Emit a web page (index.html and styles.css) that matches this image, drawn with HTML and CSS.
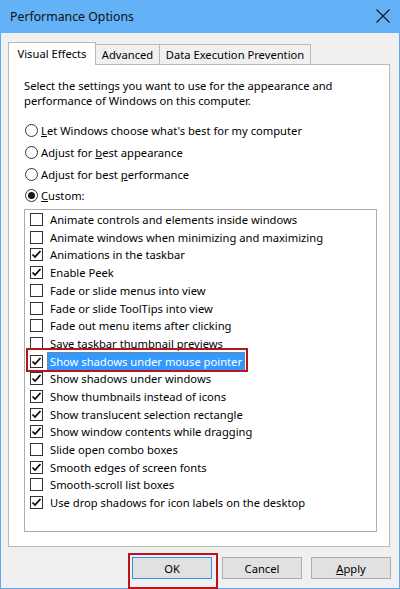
FILE: index.html
```html
<!DOCTYPE html>
<html lang="en">
    <head>
        <title>Performance Options</title>
        <link rel="stylesheet" href="styles.css">
    </head>
    <body>
        <div class="window">
            <div class="titlebar">
                <span class="title">Performance Options</span>
                <svg class="close" width="14" height="14" viewBox="0 0 14 14">
                    <path d="M0.5 0.5 L13.5 13.5 M13.5 0.5 L0.5 13.5" stroke="#1a1a1a" stroke-width="1.2" fill="none"/>
                </svg>
            </div>
            <div class="content">
                <div class="tabs">
                    <div class="tab active">Visual Effects</div>
                    <div class="tab tab-adv">Advanced</div>
                    <div class="tab tab-dep">Data Execution Prevention</div>
                </div>
                <div class="panel">
                    <p class="intro">Select the settings you want to use for the appearance and performance of Windows on this computer.</p>
                    <div class="radios">
                        <div class="radio"><span class="circle"></span><span><u>L</u>et Windows choose what's best for my computer</span></div>
                        <div class="radio"><span class="circle"></span><span>Adjust for <u>b</u>est appearance</span></div>
                        <div class="radio"><span class="circle"></span><span>Adjust for best <u>p</u>erformance</span></div>
                        <div class="radio on"><span class="circle"></span><span><u>C</u>ustom:</span></div>
                    </div>
                    <ul class="list">
                        <li><span class="box"></span><span class="label">Animate controls and elements inside windows</span></li>
                        <li><span class="box"></span><span class="label">Animate windows when minimizing and maximizing</span></li>
                        <li class="checked"><span class="box"></span><span class="label">Animations in the taskbar</span></li>
                        <li class="checked"><span class="box"></span><span class="label">Enable Peek</span></li>
                        <li><span class="box"></span><span class="label">Fade or slide menus into view</span></li>
                        <li><span class="box"></span><span class="label">Fade or slide ToolTips into view</span></li>
                        <li><span class="box"></span><span class="label">Fade out menu items after clicking</span></li>
                        <li><span class="box"></span><span class="label">Save taskbar thumbnail previews</span></li>
                        <li class="checked selected"><span class="box"></span><span class="label">Show shadows under mouse pointer</span></li>
                        <li class="checked"><span class="box"></span><span class="label">Show shadows under windows</span></li>
                        <li class="checked"><span class="box"></span><span class="label">Show thumbnails instead of icons</span></li>
                        <li class="checked"><span class="box"></span><span class="label">Show translucent selection rectangle</span></li>
                        <li class="checked"><span class="box"></span><span class="label">Show window contents while dragging</span></li>
                        <li><span class="box"></span><span class="label">Slide open combo boxes</span></li>
                        <li class="checked"><span class="box"></span><span class="label">Smooth edges of screen fonts</span></li>
                        <li><span class="box"></span><span class="label">Smooth-scroll list boxes</span></li>
                        <li class="checked"><span class="box"></span><span class="label">Use drop shadows for icon labels on the desktop</span></li>
                    </ul>
                </div>
                <div class="buttons">
                    <button class="btn default">OK</button>
                    <button class="btn">Cancel</button>
                    <button class="btn"><u>A</u>pply</button>
                </div>
            </div>
        </div>
        <script>
            // Draw the tick into every checked box
            document.querySelectorAll('li.checked .box').forEach(box => {
                box.innerHTML = '<svg width="11" height="11" viewBox="0 0 11 11"><path d="M1.5 5.5 L4 8 L9.5 2" stroke="#000" stroke-width="1.7" fill="none"/></svg>';
            });
        </script>
    </body>
</html>
```

FILE: styles.css
```css
body {
    margin: 0;
    font-family: "Noto Sans", "Liberation Sans", sans-serif;
    font-size: 11.2px;
    color: #000;
}

.window {
    width: 400px;
    height: 589px;
    box-sizing: border-box;
    border: 1px solid #5ea9f0;
    border-top: none;
    background-color: #f0f0f0;
    display: flex;
    flex-direction: column;
}

.titlebar {
    height: 33px;
    margin: 0 -1px;
    padding: 0 10px;
    background-color: #63b1f7;
    display: flex;
    align-items: center;
    justify-content: space-between;
}

.title {
    font-size: 12.3px;
    color: #111;
}

.close {
    margin-top: -1px;
}

.content {
    padding: 9px 9px 0 7px;
}

/* Tabs */

.tabs {
    display: flex;
    align-items: flex-end;
    height: 22px;
}

.tab {
    height: 20px;
    box-sizing: border-box;
    border: 1px solid #b9b9b9;
    border-bottom: none;
    border-left: none;
    background-color: #f0f0f0;
    line-height: 19px;
    text-align: center;
    white-space: nowrap;
}

.tab-adv {
    width: 64px;
}

.tab-dep {
    width: 151px;
}

.tab.active {
    width: 88px;
    height: 23px;
    margin-bottom: -1px;
    border-left: 1px solid #b9b9b9;
    background-color: white;
    position: relative;
    z-index: 1;
    line-height: 21px;
}

/* Panel */

.panel {
    height: 483px;
    box-sizing: border-box;
    padding: 13px 12px 0 15px;
    border: 1px solid #b9b9b9;
    background-color: white;
}

.intro {
    margin: 0;
    line-height: 15px;
    padding-right: 10px;
}

.radios {
    margin-top: 12px;
}

.radio {
    height: 21.7px;
    display: flex;
    align-items: center;
}

.circle {
    width: 13px;
    height: 13px;
    box-sizing: border-box;
    margin: 0 3px 0 1px;
    border: 1px solid #333;
    border-radius: 50%;
    display: flex;
    align-items: center;
    justify-content: center;
}

.radio.on .circle::before {
    content: "";
    width: 7px;
    height: 7px;
    border-radius: 50%;
    background-color: #1a1a1a;
}

/* Check list */

.list {
    list-style: none;
    margin: 2px 0 0 0;
    padding: 1px 0 0 5px;
    height: 323px;
    box-sizing: border-box;
    border: 1px solid #adadad;
}

.list li {
    height: 17.7px;
    display: flex;
    align-items: center;
    position: relative;
}

.box {
    width: 13px;
    height: 13px;
    box-sizing: border-box;
    border: 1px solid #333;
    margin-right: 4px;
    display: flex;
    align-items: center;
    justify-content: center;
}

.label {
    padding: 1px 2px;
    border: 1px solid transparent;
    white-space: nowrap;
}

.selected .label {
    background-color: #3399ff;
    color: white;
    border: 1px dotted #a8743a;
}

/* red annotation box */
.selected::after {
    content: "";
    position: absolute;
    left: -4px;
    top: -4px;
    width: 218px;
    height: 20px;
    border: 2px solid #b8141c;
}

/* Buttons */

.buttons {
    display: flex;
    justify-content: flex-end;
    gap: 9px;
    margin-top: 10px;
    margin-right: -1px;
}

.btn {
    width: 80px;
    height: 22px;
    border: 1px solid #adadad;
    background-color: #e1e1e1;
    font-family: "Noto Sans", "Liberation Sans", sans-serif;
    font-size: 11.2px;
    color: #000;
    padding: 0;
    position: relative;
}

.btn.default {
    margin-right: 1px;
    border-color: #3a8ee6;
}

.btn.default::after {
    content: "";
    position: absolute;
    left: -5px;
    top: -5px;
    width: 86px;
    height: 32px;
    border: 2px solid #b8141c;
}
```
